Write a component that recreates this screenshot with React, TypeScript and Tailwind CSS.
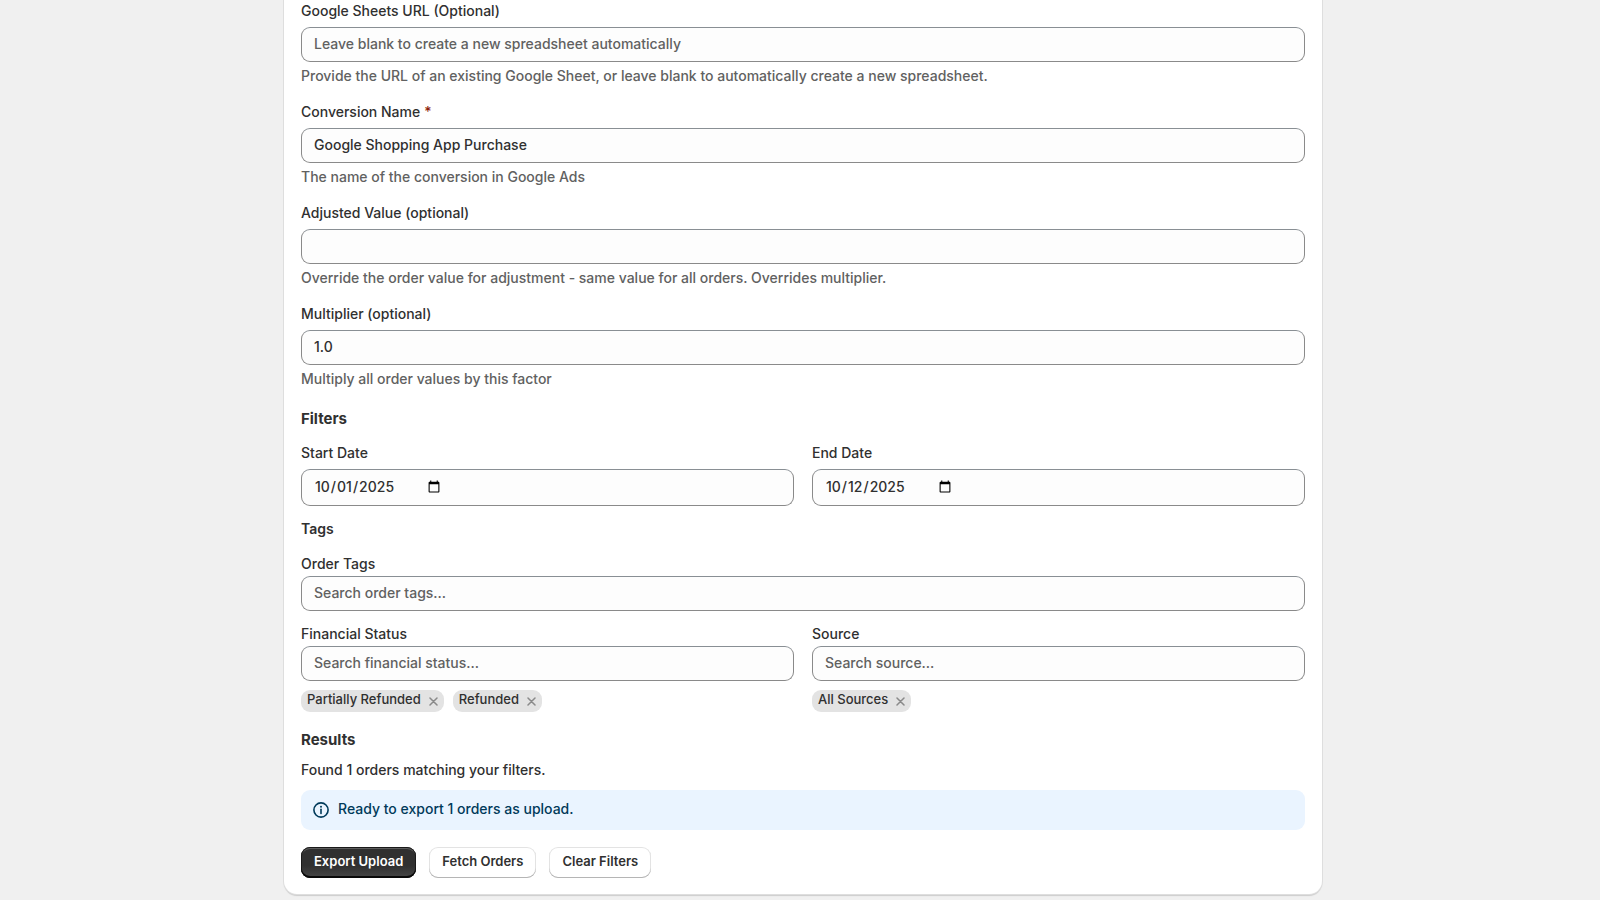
import React, { useId, useState } from 'react';

interface FieldProps {
  label: string;
  help?: string;
  placeholder?: string;
  value?: string;
  required?: boolean;
}

const inputClass =
  'block h-[35px] w-full rounded-[9px] border border-[#8a8a8a] border-t-[#898f94] bg-[#fdfdfd] px-3 pb-[3px] text-[#303030] placeholder:text-[#616161]';

const Field: React.FC<FieldProps> = ({ label, help, placeholder, value = '', required }) => {
  const id = useId();
  const [text, setText] = useState(value);

  return (
    <div>
      <label htmlFor={id} className="block">
        {label}
        {required && <span className="ml-1 text-[#8e1f0b]">*</span>}
      </label>
      <input
        id={id}
        type="text"
        className={`mt-1.5 ${inputClass}`}
        placeholder={placeholder}
        value={text}
        onChange={(e) => setText(e.target.value)}
      />
      {help && <p className="mt-[3px] text-[#616161]">{help}</p>}
    </div>
  );
};

const DateField: React.FC<{ label: string; value: string }> = ({ label, value }) => {
  const id = useId();
  const [date, setDate] = useState(value);

  return (
    <div>
      <label htmlFor={id} className="block">{label}</label>
      <div className="mt-1.5 flex h-[37px] items-center rounded-[9px] border border-[#8a8a8a] border-t-[#898f94] bg-[#fdfdfd] px-3 pb-0.5">
        <input
          id={id}
          type="date"
          className="w-[129px] bg-transparent outline-none"
          value={date}
          onChange={(e) => setDate(e.target.value)}
        />
      </div>
    </div>
  );
};

interface TagFieldProps {
  label: string;
  placeholder: string;
  initialTags?: string[];
}

const TagField: React.FC<TagFieldProps> = ({ label, placeholder, initialTags = [] }) => {
  const id = useId();
  const [tags, setTags] = useState(initialTags);

  return (
    <div>
      <label htmlFor={id} className="block">{label}</label>
      <input id={id} type="text" className={`mt-0.5 ${inputClass}`} placeholder={placeholder} />
      {tags.length > 0 && (
        <div className="mt-[9px] flex flex-wrap gap-[9px]">
          {tags.map((tag) => (
            <span
              key={tag}
              className="flex h-[22px] items-center rounded-[9px] bg-[#e3e3e3] px-1.5 text-[13px] leading-[18px]"
            >
              <span className="pb-1">{tag}</span>
              <button
                type="button"
                aria-label={`Remove ${tag}`}
                className="ml-2 text-[#8a8a8a]"
                onClick={() => setTags(tags.filter((t) => t !== tag))}
              >
                <svg className="h-[9px] w-[9px]" viewBox="0 0 9 9" fill="none" stroke="currentColor" strokeWidth="1.5" strokeLinecap="round">
                  <path d="M1 1l7 7M8 1l-7 7" />
                </svg>
              </button>
            </span>
          ))}
        </div>
      )}
    </div>
  );
};

const InfoIcon = () => (
  <svg className="h-4 w-4 shrink-0" viewBox="0 0 16 16" fill="none" stroke="currentColor" strokeWidth="1.6">
    <circle cx="8" cy="8" r="7.1" />
    <path d="M8 7.3v4.2" strokeLinecap="round" />
    <circle cx="8" cy="4.8" r="1" fill="currentColor" stroke="none" />
  </svg>
);

const secondaryButton =
  'h-[31px] rounded-[9px] bg-white px-[13px] pb-0.5 text-[13px] font-[600] text-[#303030] shadow-[inset_0_-1px_0_#b5b5b5,inset_0_0_0_1px_#e3e3e3]';

const App: React.FC = () => {
  return (
    <div className="min-h-screen bg-[#f0f0f0] pb-1.5 pl-1.5 font-['Inter',sans-serif] text-[14px] leading-[21px] font-[450] text-[#303030]">
      <main className="mx-auto max-w-[1038px] rounded-b-[13px] bg-white px-[17px] pb-4 shadow-[0_0_0_1px_#dedede,0_2px_1px_#cccccc]">
        <div className="flex flex-col gap-[15px]">
          <Field
            label="Google Sheets URL (Optional)"
            placeholder="Leave blank to create a new spreadsheet automatically"
            help="Provide the URL of an existing Google Sheet, or leave blank to automatically create a new spreadsheet."
          />
          <Field
            label="Conversion Name"
            value="Google Shopping App Purchase"
            help="The name of the conversion in Google Ads"
            required
          />
          <Field
            label="Adjusted Value (optional)"
            help="Override the order value for adjustment - same value for all orders. Overrides multiplier."
          />
          <Field label="Multiplier (optional)" value="1.0" help="Multiply all order values by this factor" />
        </div>

        <section className="mt-[19px]">
          <h2 className="text-[15px] leading-[22px] font-[650]">Filters</h2>
          <div className="mt-3 grid grid-cols-2 gap-[18px]">
            <DateField label="Start Date" value="2025-10-01" />
            <DateField label="End Date" value="2025-10-12" />
          </div>
          <h3 className="mt-3 mb-3.5 font-[600]">Tags</h3>
          <TagField label="Order Tags" placeholder="Search order tags..." />
          <div className="mt-3 grid grid-cols-2 gap-[18px]">
            <TagField
              label="Financial Status"
              placeholder="Search financial status..."
              initialTags={['Partially Refunded', 'Refunded']}
            />
            <TagField label="Source" placeholder="Search source..." initialTags={['All Sources']} />
          </div>
        </section>

        <section className="mt-[17px]">
          <h2 className="text-[15px] leading-[22px] font-[650]">Results</h2>
          <p className="mt-2">Found 1 orders matching your filters.</p>
          <div role="status" className="mt-2.5 flex h-10 items-center gap-[9px] rounded-[9px] bg-[#eaf4ff] px-3 text-[#003a5a]">
            <InfoIcon />
            <p className="pb-[3px]">Ready to export 1 orders as upload.</p>
          </div>
        </section>

        <div className="mt-[17px] flex gap-[13px]">
          <button
            type="button"
            className="h-[31px] rounded-[9px] bg-linear-to-b from-[#303030] from-60% to-[#474747] px-[13px] pb-0.5 text-[13px] font-[600] text-white shadow-[inset_0_-2px_0_#0a0a0a,inset_0_0_0_1px_#1a1a1a,inset_0_2px_0_#5c5c5c]"
          >
            Export Upload
          </button>
          <button type="button" className={secondaryButton}>Fetch Orders</button>
          <button type="button" className={secondaryButton}>Clear Filters</button>
        </div>
      </main>
    </div>
  );
};

export default App;
